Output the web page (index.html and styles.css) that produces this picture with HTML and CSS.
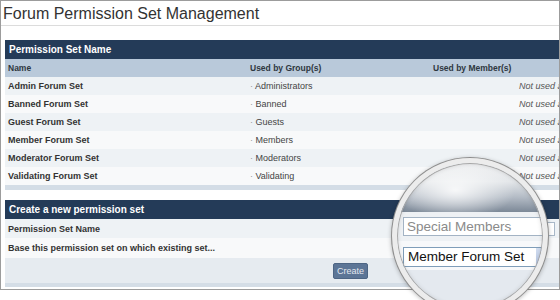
FILE: index.html
```html
<!DOCTYPE html>
<html>
<head>
<meta charset="utf-8">
<link rel="stylesheet" href="styles.css">
</head>
<body>
<div class="page">
  <div class="frame">
    <h1 class="title">Forum Permission Set Management</h1>
    <div class="panel">
      <div class="bar">Permission Set Name</div>
      <div class="row head"><span class="c1">Name</span><span class="c2">Used by Group(s)</span><span class="c3">Used by Member(s)</span></div>
      <div class="row odd"><span class="c1">Admin Forum Set</span><span class="c2"><i class="dot">·</i> Administrators</span><span class="c3 na">Not used as default</span></div>
      <div class="row even"><span class="c1">Banned Forum Set</span><span class="c2"><i class="dot">·</i> Banned</span><span class="c3 na">Not used as default</span></div>
      <div class="row odd"><span class="c1">Guest Forum Set</span><span class="c2"><i class="dot">·</i> Guests</span><span class="c3 na">Not used as default</span></div>
      <div class="row even"><span class="c1">Member Forum Set</span><span class="c2"><i class="dot">·</i> Members</span><span class="c3 na">Not used as default</span></div>
      <div class="row odd"><span class="c1">Moderator Forum Set</span><span class="c2"><i class="dot">·</i> Moderators</span><span class="c3 na">Not used as default</span></div>
      <div class="row even"><span class="c1">Validating Forum Set</span><span class="c2"><i class="dot">·</i> Validating</span><span class="c3 na">Not used as default</span></div>
      <div class="foot"></div>
    </div>
    <div class="panel create">
      <div class="bar">Create a new permission set</div>
      <div class="frow odd"><span class="lbl">Permission Set Name</span><span class="field"></span></div>
      <div class="frow even"><span class="lbl">Base this permission set on which existing set...</span></div>
      <div class="btnrow"><button class="btn" type="button">Create</button></div>
      <div class="foot small"></div>
    </div>
  </div>
  <div class="lens">
    <div class="glare"></div>
    <div class="lrow lrow1"><div class="linput">Special Members</div></div>
    <div class="lrow lrow2"><div class="lselect"><span>Member Forum Set</span><i class="arrow"></i></div></div>
  </div>
</div>
</body>
</html>
```

FILE: styles.css
```css
html, body {
  margin: 0;
  padding: 0;
  overflow: hidden;
  background: #fff;
}
body {
  font-family: "Liberation Sans", Arial, sans-serif;
}
.page {
  position: relative;
  width: 560px;
  height: 300px;
}
.frame {
  width: 560px;
  height: 290px;
  box-sizing: border-box;
  border: 1px solid #9c9c9c;
}
.title {
  margin: 0 0 14px 0;
  padding: 4px 0 0 2px;
  height: 20px;
  line-height: 18px;
  font-size: 16px;
  font-weight: normal;
  color: #333;
  border-bottom: 1px solid #dcdcdc;
}
.panel {
  margin-left: 4px;
}
.panel.create {
  margin-top: 10px;
}
.bar {
  height: 19px;
  line-height: 19px;
  background: #243b58;
  color: #fff;
  font-weight: bold;
  font-size: 10px;
  padding-left: 4px;
}
.row {
  display: grid;
  grid-template-columns: 245px 183px 1fr;
  height: 18px;
  align-items: center;
  font-size: 9px;
  color: #444;
  white-space: nowrap;
}
.row .c1 {
  padding-left: 3px;
  font-weight: bold;
  color: #333;
}
.row.head {
  background: #b9c9da;
  font-weight: bold;
  font-size: 8.5px;
  color: #2e3740;
}
.row.head .c1 { color: #2e3740; }
.odd { background: #eef2f5; }
.even { background: #f8f9fa; }
.dot {
  font-style: normal;
  color: #999;
}
.c3.na {
  padding-left: 86px;
  font-style: italic;
  color: #555;
  overflow: hidden;
}
.foot {
  height: 5px;
  background: #d4dde6;
}
.foot.small {
  height: 4px;
}
.frow {
  display: flex;
  align-items: center;
  height: 19px;
  padding-left: 3px;
  font-size: 9px;
  font-weight: bold;
  color: #333;
}
.frow.even {
  height: 20px;
}
.field {
  margin-left: auto;
  margin-right: 4px;
  width: 85px;
  height: 14px;
  box-sizing: border-box;
  border: 1px solid #a9b8c8;
  background: #fff;
}
.btnrow {
  height: 25px;
  background: #e6ebf0;
  display: flex;
  align-items: center;
  padding-left: 328px;
}
.btn {
  width: 35px;
  height: 16px;
  padding: 0;
  margin: 1px 0 0 0;
  background: #5c7596;
  border: 1px solid #4d6584;
  border-radius: 2px;
  color: #e3e8ef;
  font-family: "Liberation Sans", Arial, sans-serif;
  font-size: 9px;
  line-height: 14px;
}

/* magnifier */
.lens {
  position: absolute;
  left: 392px;
  top: 158px;
  width: 156px;
  height: 156px;
  box-sizing: border-box;
  border-radius: 50%;
  border: 5px solid #ececec;
  overflow: hidden;
  background: #e4e9ef;
  box-shadow: 0 0 0 1px #8e8e8e, 0 1px 4px 1px rgba(0,0,0,0.25);
}
.lens::after {
  content: "";
  position: absolute;
  inset: 0;
  border-radius: 50%;
  box-shadow: inset 0 0 0 1px #a8a8a8, inset 0 0 5px rgba(0,0,0,0.18);
  pointer-events: none;
}
.glare {
  height: 49px;
  background:
    radial-gradient(ellipse 60px 30px at 40% 55%, rgba(255,255,255,0.85), rgba(255,255,255,0) 100%),
    linear-gradient(180deg, #eeeff1 0%, #e3e6e9 38%, #b3bbc5 70%, #7c8897 100%);
}
.lrow1 {
  height: 29px;
  box-sizing: border-box;
  padding: 5px 0 0 6px;
  background: #eef1f4;
}
.lrow2 {
  height: 29px;
  box-sizing: border-box;
  padding: 6px 0 0 6px;
  background: #f7f8fa;
}
.linput {
  width: 150px;
  height: 19px;
  box-sizing: border-box;
  border: 1px solid #a3b3c4;
  background: #fff;
  padding-left: 3px;
  font-size: 13.5px;
  line-height: 17px;
  color: #8a8a8a;
  white-space: nowrap;
}
.lselect {
  position: relative;
  width: 143px;
  height: 20px;
  box-sizing: border-box;
  border: 1px solid #7f9db9;
  background: #fff;
  padding-left: 4px;
  font-size: 13.5px;
  line-height: 18px;
  color: #111;
  white-space: nowrap;
}
.arrow {
  position: absolute;
  right: 0;
  top: 0;
  width: 9px;
  height: 18px;
  background: linear-gradient(180deg, #d3def0, #b5c6e4);
}
```
